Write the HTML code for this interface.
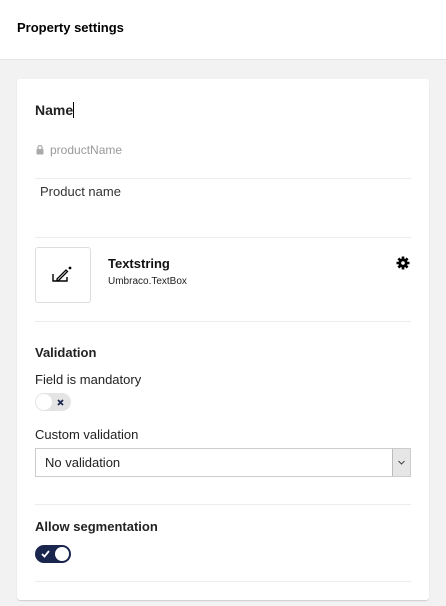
<!DOCTYPE html>
<html><head><style>
*{box-sizing:border-box;margin:0;padding:0}
body{width:446px;height:606px;background:#f3f2f3;font-family:"Liberation Sans",sans-serif;color:#1b264f;position:relative;overflow:hidden}
.hdr{position:absolute;left:0;top:0;width:446px;height:60px;background:#fff;border-bottom:1px solid #e4e4e4}
.t{position:absolute;white-space:nowrap}
.card{position:absolute;left:17px;top:79px;width:412px;height:521px;background:#fff;border-radius:3px;box-shadow:0 1px 1px rgba(0,0,0,.15)}
.ln{position:absolute;left:35px;width:376px;height:1px;background:#ececec}
</style></head><body>
<div class="hdr"></div>
<div class="t" style="left:17px;top:20px;font-size:13px;font-weight:bold;color:#000">Property settings</div>
<div class="card"></div>
<div class="t" style="left:35px;top:102px;font-size:14px;font-weight:bold;color:#222">Name<span style="display:inline-block;width:1px;height:16px;background:#000;vertical-align:-3px"></span></div>
<svg class="t" style="left:36px;top:144px" width="8" height="11" viewBox="0 0 8 11"><path d="M2 5V3.5a2 2 0 0 1 4 0V5" stroke="#aaa" stroke-width="1.3" fill="none"/><rect x="0.5" y="5" width="7" height="5.5" rx="1" fill="#aaa"/></svg>
<div class="t" style="left:50px;top:143px;font-size:12px;color:#999">productName</div>
<div class="ln" style="top:178px"></div>
<div class="t" style="left:40px;top:184px;font-size:13px;color:#333">Product name</div>
<div class="ln" style="top:237px"></div>
<div class="t" style="left:35px;top:247px;width:56px;height:56px;border:1px solid #ddd;border-radius:3px"></div>
<svg class="t" style="left:52px;top:266px" width="20" height="18" viewBox="0 0 20 18"><path d="M1 8v7h14v-4" stroke="#000" stroke-width="1.4" fill="none"/><path d="M5 13l9-9 1.5 1.5-9 9H5z" stroke="#000" stroke-width="1.3" fill="none"/><circle cx="18" cy="2" r="1.4" fill="#000"/></svg>
<div class="t" style="left:108px;top:256px;font-size:13px;font-weight:bold;color:#111">Textstring</div>
<div class="t" style="left:108px;top:276px;font-size:10px;color:#222">Umbraco.TextBox</div>
<svg class="t" style="left:396px;top:256px" width="14" height="14" viewBox="0 0 14 14"><g fill="#000"><circle cx="7" cy="7" r="4.6"/><g stroke="#000" stroke-width="2.6" stroke-linecap="butt"><path d="M7 0.5v13M0.5 7h13M2.4 2.4l9.2 9.2M11.6 2.4l-9.2 9.2"/></g></g><circle cx="7" cy="7" r="1.8" fill="#fff"/></svg>
<div class="ln" style="top:321px"></div>
<div class="t" style="left:35px;top:345px;font-size:13px;font-weight:bold;color:#222">Validation</div>
<div class="t" style="left:35px;top:372px;font-size:13px;color:#222">Field is mandatory</div>
<div class="t" style="left:35px;top:393px;width:36px;height:18px;border-radius:9px;background:#e4e4e4"><div style="position:absolute;left:1px;top:1px;width:16px;height:16px;border-radius:50%;background:#fff"></div><svg style="position:absolute;left:22px;top:6px" width="7" height="7" viewBox="0 0 7 7"><path d="M1 1l5 5M6 1L1 6" stroke="#1b264f" stroke-width="1.7"/></svg></div>
<div class="t" style="left:35px;top:427px;font-size:13px;color:#222">Custom validation</div>
<div class="t" style="left:35px;top:448px;width:376px;height:29px;border:1px solid #ccc;background:#fff"><div style="position:absolute;left:9px;top:6px;font-size:13px;color:#222">No validation</div><div style="position:absolute;right:0;top:0;width:18px;height:27px;background:#e6e6e6;border-left:1px solid #bbb"><svg style="position:absolute;left:5px;top:11px" width="7" height="5" viewBox="0 0 7 5"><path d="M0.5 1l3 3 3-3" stroke="#444" stroke-width="1" fill="none"/></svg></div></div>
<div class="ln" style="top:504px"></div>
<div class="t" style="left:35px;top:519px;font-size:13px;font-weight:bold;color:#222">Allow segmentation</div>
<div class="t" style="left:35px;top:545px;width:36px;height:18px;border-radius:9px;background:#1b264f"><div style="position:absolute;right:2px;top:2px;width:14px;height:14px;border-radius:50%;background:#fff"></div><svg style="position:absolute;left:6px;top:5px" width="9" height="8" viewBox="0 0 9 8"><path d="M1 4l2.5 2.5L8 1" stroke="#fff" stroke-width="1.8" fill="none"/></svg></div>
<div class="ln" style="top:581px"></div>
</body></html>
